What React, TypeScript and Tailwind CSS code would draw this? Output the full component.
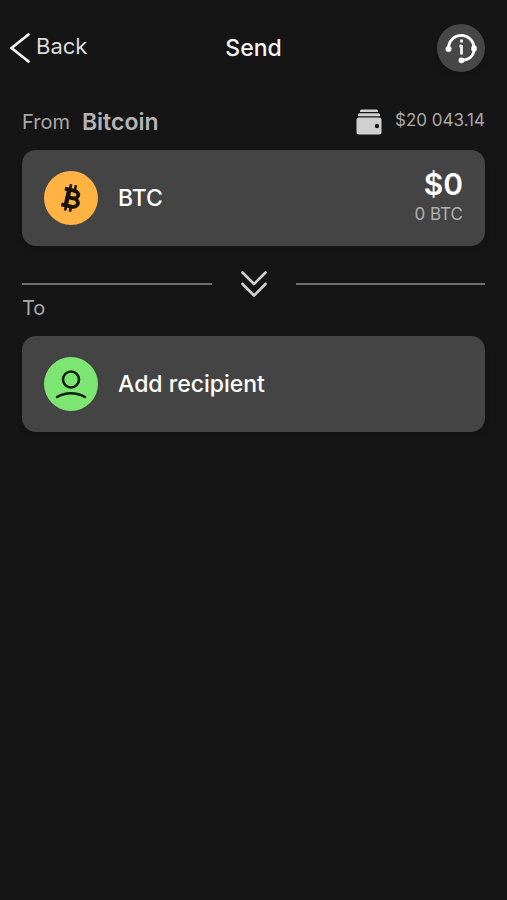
function BackIcon() {
  return (
    <svg width="20" height="32" viewBox="0 0 20 32" fill="none" stroke="#f5f5f5" strokeWidth="2.8" strokeLinecap="round" strokeLinejoin="round" aria-hidden="true">
      <path d="M18.5 2.5 1.5 16l17 13.5" />
    </svg>
  );
}

function SupportIcon() {
  return (
    <svg width="48" height="48" viewBox="0 0 48 48" fill="none" aria-hidden="true">
      <path d="M11.500 25V23a12.800 12.800 0 0 1 25.500 0v2c0 7-5 11.300-12.500 11.300" stroke="#fff" strokeWidth="2.800" strokeLinecap="round" />
      <circle cx="11.500" cy="25" r="3" fill="#fff" />
      <ellipse cx="37" cy="24.500" rx="2.800" ry="3.200" fill="#fff" />
      <circle cx="24.500" cy="36.300" r="2.900" fill="#fff" />
      <path d="M24.500 15.500v3M24.500 21v9.500M22.500 22h2" stroke="#f0f0f0" strokeWidth="2.800" />
    </svg>
  );
}

function WalletIcon() {
  return (
    <svg width="26" height="26" viewBox="0 0 26 26" fill="#d0d0d0" aria-hidden="true">
      <path d="M5.500 0.500h15a1.500 1.500 0 0 1 1.500 1.500v1H4V2A1.500 1.500 0 0 1 5.500 0.500Z" />
      <path d="M3.500 4.300h19a1.500 1.500 0 0 1 1.500 1.500v1.400H2V5.800A1.500 1.500 0 0 1 3.500 4.300Z" />
      <path d="M3 8.500h20a2.500 2.500 0 0 1 2.500 2.500V23a2.500 2.500 0 0 1-2.500 2.500H3A2.500 2.500 0 0 1 .5 23V11A2.500 2.500 0 0 1 3 8.500Z" />
      <circle cx="21" cy="17" r="2.200" fill="#151515" />
    </svg>
  );
}

function BitcoinIcon() {
  return (
    <svg width="54" height="54" viewBox="0 0 54 54" fill="none" stroke="#17130b" aria-hidden="true">
      <g transform="rotate(13 27 27)" strokeWidth="3.800">
        <path d="M19 19.200H28c7.300 0 7.300 7.600 0 7.600h-4.500H29c8 0 8 8.500 0 8.500h-10" />
        <path d="M23.500 19v16.500" strokeWidth="4.400" />
        <path d="M24 13.500v5M29 13.500v5M24 35.500v5M29 35.500v5" strokeWidth="2.600" />
      </g>
    </svg>
  );
}

function RecipientIcon() {
  return (
    <svg width="54" height="54" viewBox="0 0 54 54" fill="none" stroke="#102010" strokeWidth="2.600" strokeLinecap="round" aria-hidden="true">
      <circle cx="27" cy="22.500" r="8" />
      <path d="M13 40c8.500-5 19.500-5 28 0" />
    </svg>
  );
}

export default function App() {
  return (
    <main className="min-h-screen bg-[#151515] font-[Inter,'Liberation_Sans',sans-serif] text-white">
      <header className="grid grid-cols-[1fr_auto_1fr] items-center px-[22px] pt-6">
        <button type="button" className="-ml-3 flex h-12 items-center gap-[6px] justify-self-start text-[#dcdcdc]">
          <BackIcon />
          <span className="pb-1 text-[22px] leading-6">Back</span>
        </button>
        <h1 className="text-[23px] leading-7 font-medium text-[#f5f5f5]">Send</h1>
        <button type="button" aria-label="Support" className="size-12 justify-self-end rounded-full bg-[#474747] shadow-md">
          <SupportIcon />
        </button>
      </header>

      <div className="px-[22px]">
        <section>
          <div className="flex h-[78px] items-end justify-between pb-[14px]">
            <h2 className="flex items-center gap-3 text-[20px] leading-7 text-[#a8a8a8]">
              From <span className="text-[23px] font-semibold text-[#b4b4b4]">Bitcoin</span>
            </h2>
            <p className="flex items-center gap-[13px] text-[17px] leading-7 text-[#a8a8a8]">
              <WalletIcon />
              <span className="pb-1 leading-6">$20 043.14</span>
            </p>
          </div>
          <button type="button" className="flex h-24 w-full items-center gap-5 rounded-[14px] bg-[#444] px-[22px] text-left shadow-md">
            <span className="size-[54px] shrink-0 rounded-full bg-[#ffb343]">
              <BitcoinIcon />
            </span>
            <span className="flex-1 text-[23px] leading-7 font-medium">BTC</span>
            <span className="flex flex-col text-right">
              <span className="text-[30px] leading-8 font-semibold">$0</span>
              <span className="text-[17px] leading-7 text-[#b0b0b0]">0 BTC</span>
            </span>
          </button>
        </section>

        <div className="flex h-[76px] items-center gap-7">
          <span className="h-[2px] flex-1 bg-[#707070]" />
          <svg width="28" height="28" viewBox="0 0 28 28" fill="none" stroke="#d0d0d0" strokeWidth="2.600" strokeLinecap="round" strokeLinejoin="round" aria-hidden="true">
            <path d="m2.500 2.500 11.500 11.500L25.500 2.500M2.500 14 14 25.500 25.500 14" />
          </svg>
          <span className="h-[2px] flex-1 bg-[#707070]" />
        </div>

        <section className="-mt-7">
          <h2 className="h-[42px] text-[20px] leading-7 text-[#a8a8a8]">To</h2>
          <button type="button" className="flex h-24 w-full items-center gap-5 rounded-[14px] bg-[#444] px-[22px] text-left shadow-md">
            <span className="size-[54px] shrink-0 rounded-full bg-[#7de673]">
              <RecipientIcon />
            </span>
            <span className="text-[23px] leading-7 font-medium">Add recipient</span>
          </button>
        </section>
      </div>
    </main>
  );
}
